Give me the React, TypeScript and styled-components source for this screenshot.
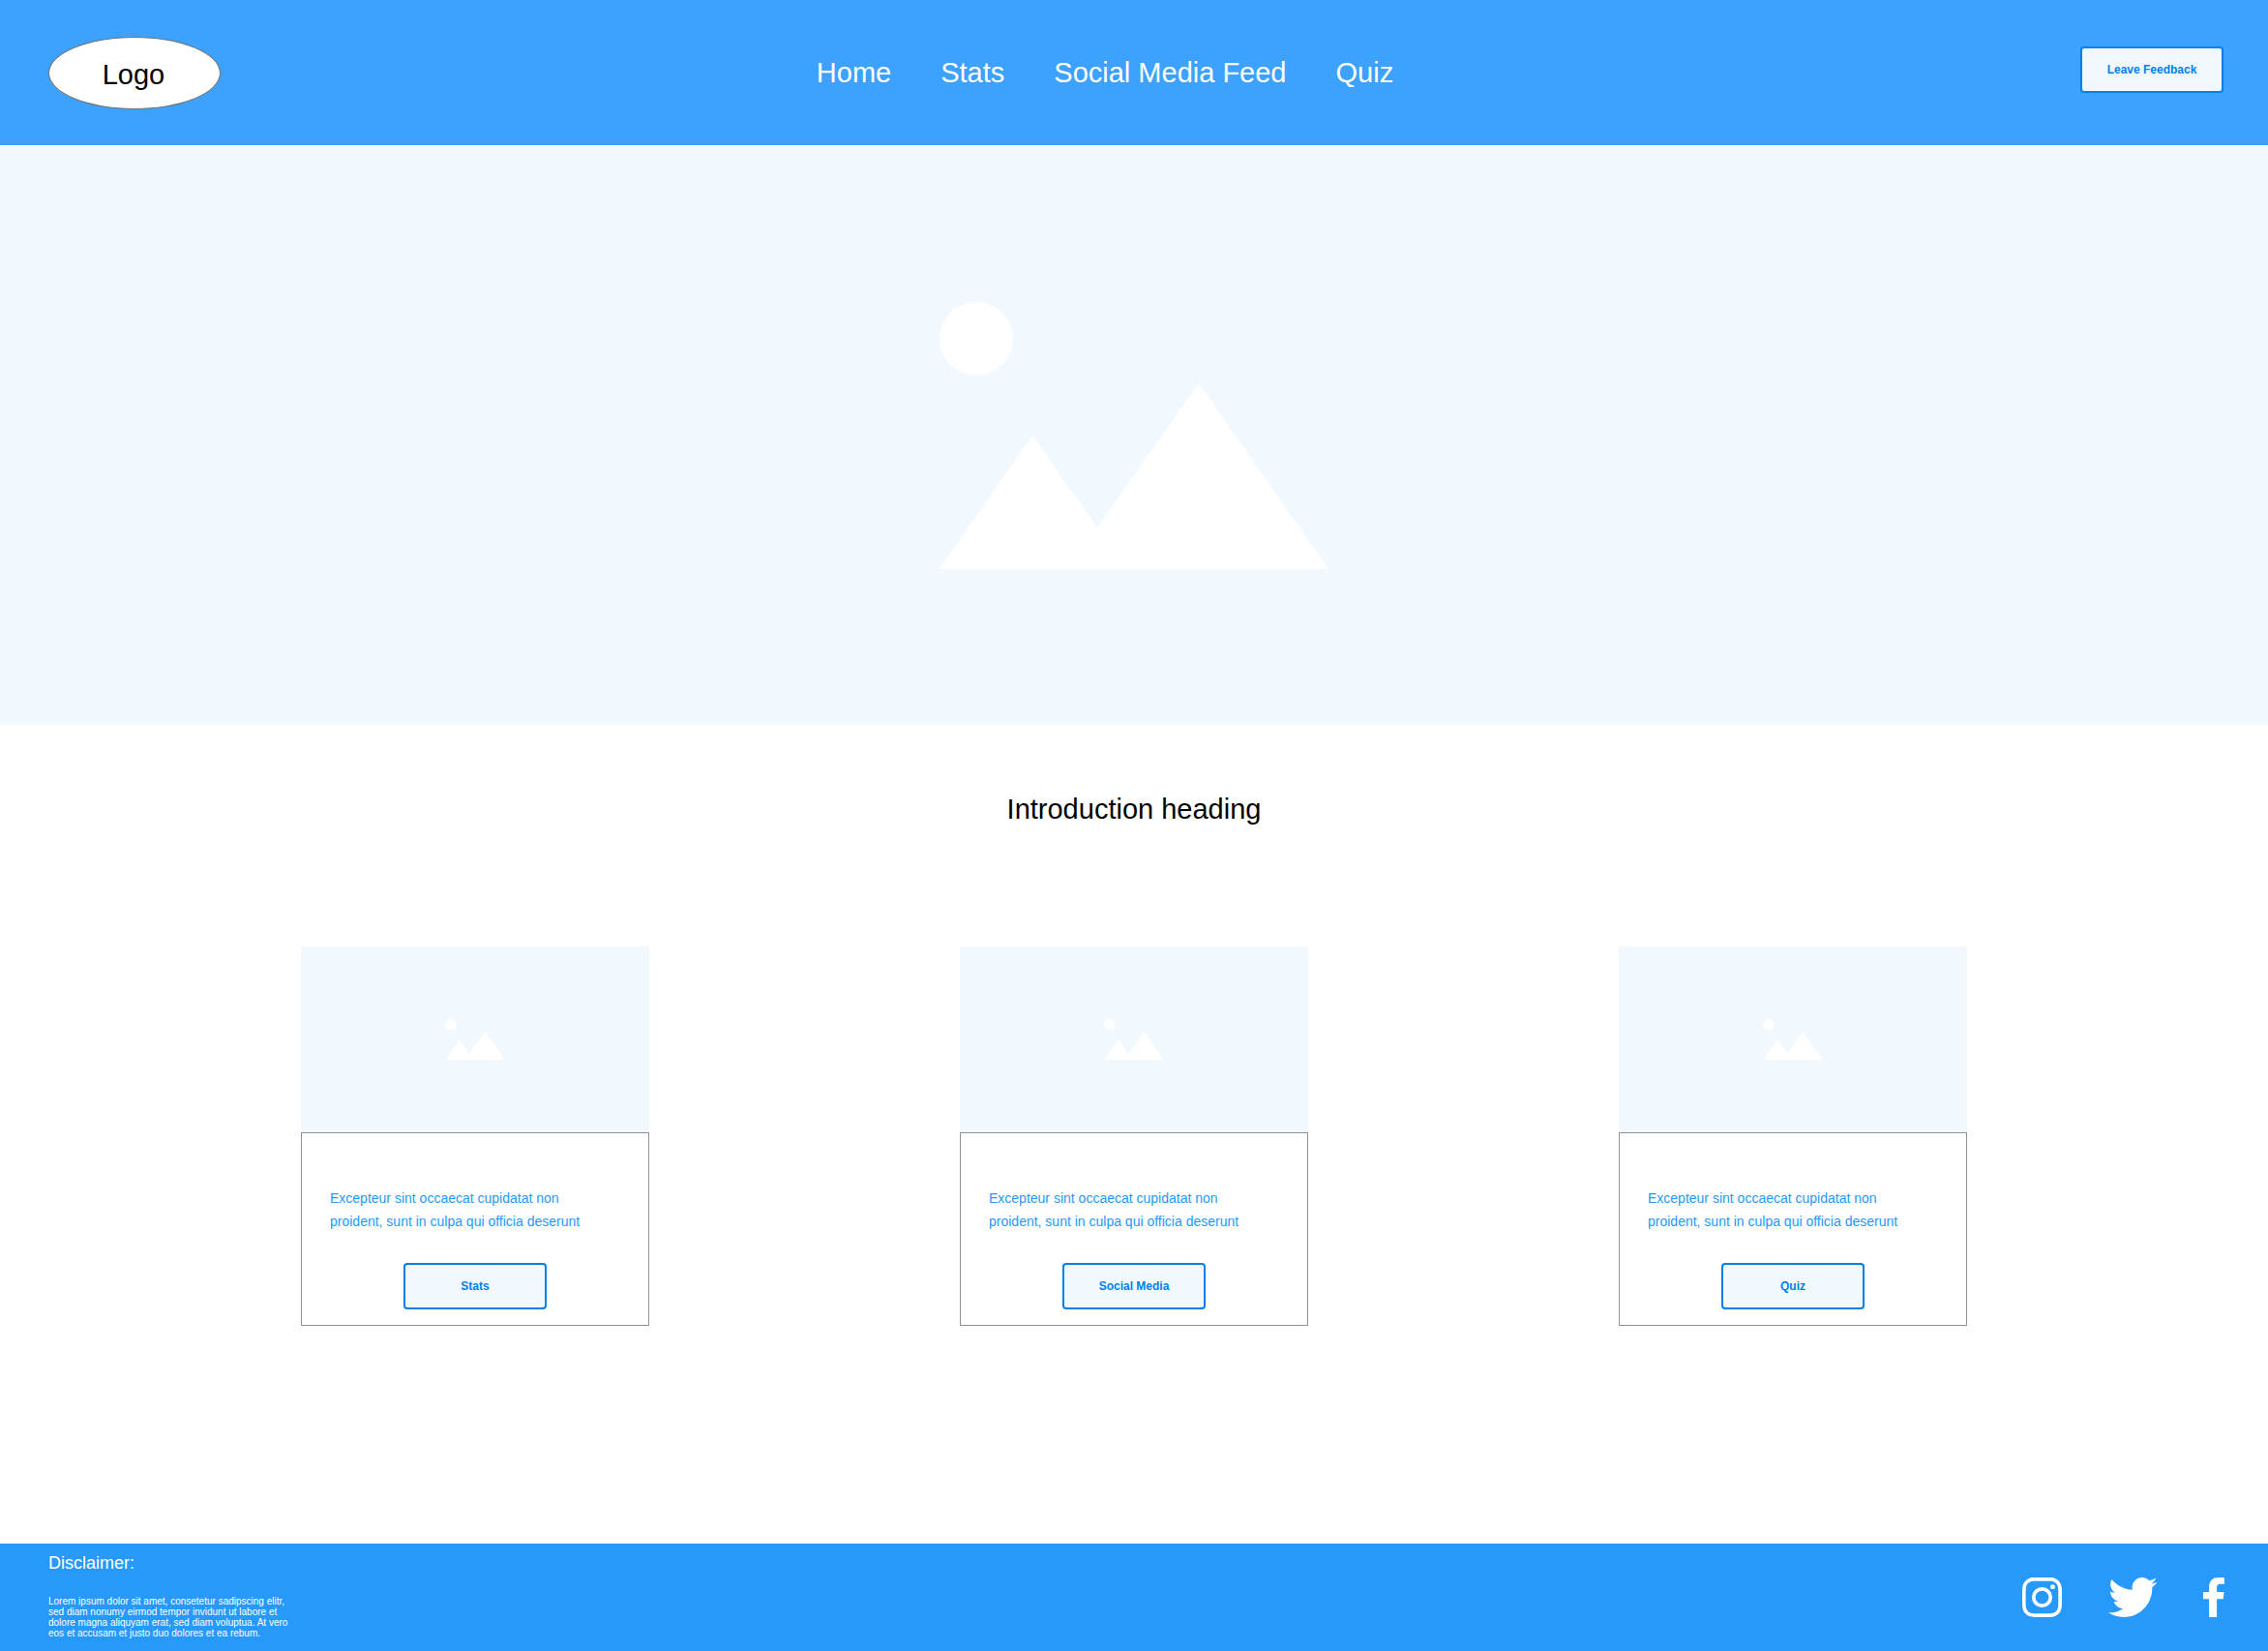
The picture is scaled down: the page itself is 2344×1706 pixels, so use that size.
import React from "react";
import styled, { createGlobalStyle } from "styled-components";

const GlobalStyle = createGlobalStyle`
  *, *::before, *::after { box-sizing: border-box; }
  body {
    margin: 0;
    background: #ffffff;
    color: #000000;
    font-family: "Liberation Sans", Arial, sans-serif;
  }
`;

const Page = styled.div`
  display: flex;
  flex-direction: column;
  min-height: 100vh;
`;

const Header = styled.header`
  display: grid;
  grid-template-columns: 1fr auto 1fr;
  align-items: start;
  min-height: 150px;
  padding: 38px 46px 37px 50px;
  background: #3da1fe;
`;

const Logo = styled.a`
  display: flex;
  align-items: center;
  justify-content: center;
  width: 178px;
  height: 75px;
  padding: 4px 2px 0 0;
  border: 1px solid #707070;
  border-radius: 50%;
  background: #ffffff;
  color: #000000;
  font-size: 29px;
  line-height: 33px;
  text-decoration: none;
`;

const Nav = styled.nav`
  display: flex;
  gap: 51px;
  margin-right: 64px;
  padding-top: 21px;
`;

const NavLink = styled.a`
  color: #ffffff;
  font-size: 29px;
  line-height: 33px;
  text-decoration: none;
`;

const HeaderAction = styled.div`
  display: flex;
  justify-content: flex-end;
  padding-top: 10px;
`;

const Button = styled.button`
  width: 148px;
  height: 48px;
  padding: 0;
  border: 2px solid #0080ea;
  border-radius: 4px;
  background: #f1f9ff;
  color: #0080ea;
  font-family: inherit;
  font-size: 12px;
  font-weight: 700;
  line-height: 14px;
  cursor: pointer;
`;

const Placeholder = styled.div<{ $height: number; $iconWidth: number }>`
  display: flex;
  align-items: center;
  justify-content: center;
  height: ${(p) => p.$height}px;
  background: #f1f9ff;

  svg {
    width: ${(p) => p.$iconWidth}px;
    height: auto;
    fill: #ffffff;
  }
`;

const Main = styled.main`
  flex: 1;
`;

const Heading = styled.h1`
  margin: 0;
  padding: 71px 0 125px;
  font-size: 29px;
  font-weight: 400;
  line-height: 33px;
  text-align: center;
`;

const Cards = styled.section`
  display: flex;
  flex-wrap: wrap;
  justify-content: space-between;
  gap: 24px;
  max-width: 1722px;
  margin: 0 auto;
  padding-bottom: 225px;
`;

const CardFrame = styled.article`
  width: 360px;
`;

const CardBody = styled.div`
  display: flex;
  flex-direction: column;
  align-items: center;
  gap: 31px;
  padding: 55px 29px 16px;
  border: 1px solid #8f9295;
`;

const CardText = styled.p`
  align-self: flex-start;
  max-width: 280px;
  margin: 0;
  color: #2699fb;
  font-size: 14px;
  line-height: 24px;
`;

const Footer = styled.footer`
  display: flex;
  justify-content: space-between;
  align-items: flex-start;
  padding: 10px 45px 13px 50px;
  background: #2699fb;
  color: #ffffff;
`;

const Disclaimer = styled.section`
  display: flex;
  flex-direction: column;
  gap: 24px;
  width: 252px;
`;

const DisclaimerTitle = styled.h2`
  margin: 0;
  font-size: 18px;
  font-weight: 400;
  line-height: 20px;
`;

const DisclaimerText = styled.p`
  margin: 0;
  font-size: 10px;
  line-height: 11px;
`;

const Social = styled.div`
  display: flex;
  gap: 48px;
  padding-top: 25px;
`;

const SocialLink = styled.a`
  display: flex;
  color: #ffffff;

  svg {
    height: 41px;
    width: auto;
    fill: currentColor;
  }
`;

function PictureGlyph() {
  return (
    <svg viewBox="0 0 402 276" aria-hidden="true">
      <circle cx="38" cy="38" r="38" />
      <path d="M0 276 96 138 163 233 268 84 402 276Z" />
    </svg>
  );
}

function InstagramIcon() {
  return (
    <svg viewBox="0 0 24 24" aria-hidden="true">
      <path d="M12 0C8.74 0 8.333.015 7.053.072 5.775.132 4.905.333 4.14.63c-.789.306-1.459.717-2.126 1.384S.935 3.35.63 4.14C.333 4.905.131 5.775.072 7.053.012 8.333 0 8.74 0 12s.015 3.667.072 4.947c.06 1.277.261 2.148.558 2.913.306.788.717 1.459 1.384 2.126.667.666 1.336 1.079 2.126 1.384.766.296 1.636.499 2.913.558C8.333 23.988 8.74 24 12 24s3.667-.015 4.947-.072c1.277-.06 2.148-.262 2.913-.558.788-.306 1.459-.718 2.126-1.384.666-.667 1.079-1.335 1.384-2.126.296-.765.499-1.636.558-2.913.06-1.28.072-1.687.072-4.947s-.015-3.667-.072-4.947c-.06-1.277-.262-2.149-.558-2.913-.306-.789-.718-1.459-1.384-2.126C21.319 1.347 20.651.935 19.86.63c-.765-.297-1.636-.499-2.913-.558C15.667.012 15.26 0 12 0zm0 2.16c3.203 0 3.585.016 4.85.071 1.17.055 1.805.249 2.227.415.562.217.96.477 1.382.896.419.42.679.819.896 1.381.164.422.36 1.057.413 2.227.057 1.266.07 1.646.07 4.85s-.015 3.585-.074 4.85c-.061 1.17-.256 1.805-.421 2.227-.224.562-.479.96-.899 1.382-.419.419-.824.679-1.38.896-.42.164-1.065.36-2.235.413-1.274.057-1.649.07-4.859.07-3.211 0-3.586-.015-4.859-.074-1.171-.061-1.816-.256-2.236-.421-.569-.224-.96-.479-1.379-.899-.421-.419-.69-.824-.9-1.38-.165-.42-.359-1.065-.42-2.235-.045-1.26-.061-1.649-.061-4.844 0-3.196.016-3.586.061-4.861.061-1.17.255-1.814.42-2.234.21-.57.479-.96.9-1.381.419-.419.81-.689 1.379-.898.42-.166 1.051-.361 2.221-.421 1.275-.045 1.65-.06 4.859-.06zm0 3.678a6.162 6.162 0 1 0 0 12.324 6.162 6.162 0 1 0 0-12.324zM12 16c-2.21 0-4-1.79-4-4s1.79-4 4-4 4 1.79 4 4-1.79 4-4 4zm7.846-10.405a1.441 1.441 0 1 1-2.88 0 1.441 1.441 0 0 1 2.88 0z" />
    </svg>
  );
}

function TwitterIcon() {
  return (
    <svg viewBox="0 48 512 416" aria-hidden="true">
      <path d="M459.37 151.716c.325 4.548.325 9.097.325 13.645 0 138.72-105.583 298.558-298.558 298.558-59.452 0-114.68-17.219-161.137-47.106 8.447.974 16.568 1.299 25.34 1.299 49.055 0 94.213-16.568 130.274-44.832-46.132-.975-84.792-31.188-98.112-72.772 6.498.974 12.995 1.624 19.818 1.624 9.421 0 18.843-1.3 27.614-3.573-48.081-9.747-84.143-51.98-84.143-102.985v-1.299c13.969 7.797 30.214 12.67 47.431 13.319-28.264-18.843-46.781-51.005-46.781-87.391 0-19.492 5.197-37.36 14.294-52.954 51.655 63.675 129.3 105.258 216.365 109.807-1.624-7.797-2.599-15.918-2.599-24.04 0-57.828 46.782-104.934 104.934-104.934 30.213 0 57.502 12.67 76.67 33.137 23.715-4.548 46.456-13.32 66.599-25.34-7.798 24.366-24.366 44.833-46.132 57.827 21.117-2.273 41.584-8.122 60.426-16.243-14.292 20.791-32.161 39.308-52.628 54.253z" />
    </svg>
  );
}

function FacebookIcon() {
  return (
    <svg viewBox="0 0 65 122" aria-hidden="true">
      <path d="M18 122V66H0V45H18V30C18 10 30 0 48 0 56 0 62 .5 65 1V20H54C44 20 42 25 42 32V45H64L62 66H42V122Z" />
    </svg>
  );
}

const navItems = ["Home", "Stats", "Social Media Feed", "Quiz"];
const cards = ["Stats", "Social Media", "Quiz"];

function Card({ action }: { action: string }) {
  return (
    <CardFrame>
      <Placeholder $height={192} $iconWidth={62}>
        <PictureGlyph />
      </Placeholder>
      <CardBody>
        <CardText>
          Excepteur sint occaecat cupidatat non proident, sunt in culpa qui officia deserunt
        </CardText>
        <Button type="button">{action}</Button>
      </CardBody>
    </CardFrame>
  );
}

export default function App() {
  return (
    <Page>
      <GlobalStyle />
      <Header>
        <Logo href="#">Logo</Logo>
        <Nav>
          {navItems.map((item) => (
            <NavLink key={item} href="#">
              {item}
            </NavLink>
          ))}
        </Nav>
        <HeaderAction>
          <Button type="button">Leave Feedback</Button>
        </HeaderAction>
      </Header>
      <Main>
        <Placeholder $height={599} $iconWidth={402}>
          <PictureGlyph />
        </Placeholder>
        <Heading>Introduction heading</Heading>
        <Cards>
          {cards.map((action) => (
            <Card key={action} action={action} />
          ))}
        </Cards>
      </Main>
      <Footer>
        <Disclaimer>
          <DisclaimerTitle>Disclaimer:</DisclaimerTitle>
          <DisclaimerText>
            Lorem ipsum dolor sit amet, consetetur sadipscing elitr, sed diam nonumy eirmod tempor
            invidunt ut labore et dolore magna aliquyam erat, sed diam voluptua. At vero eos et
            accusam et justo duo dolores et ea rebum.
          </DisclaimerText>
        </Disclaimer>
        <Social>
          <SocialLink href="#" aria-label="Instagram">
            <InstagramIcon />
          </SocialLink>
          <SocialLink href="#" aria-label="Twitter">
            <TwitterIcon />
          </SocialLink>
          <SocialLink href="#" aria-label="Facebook">
            <FacebookIcon />
          </SocialLink>
        </Social>
      </Footer>
    </Page>
  );
}
